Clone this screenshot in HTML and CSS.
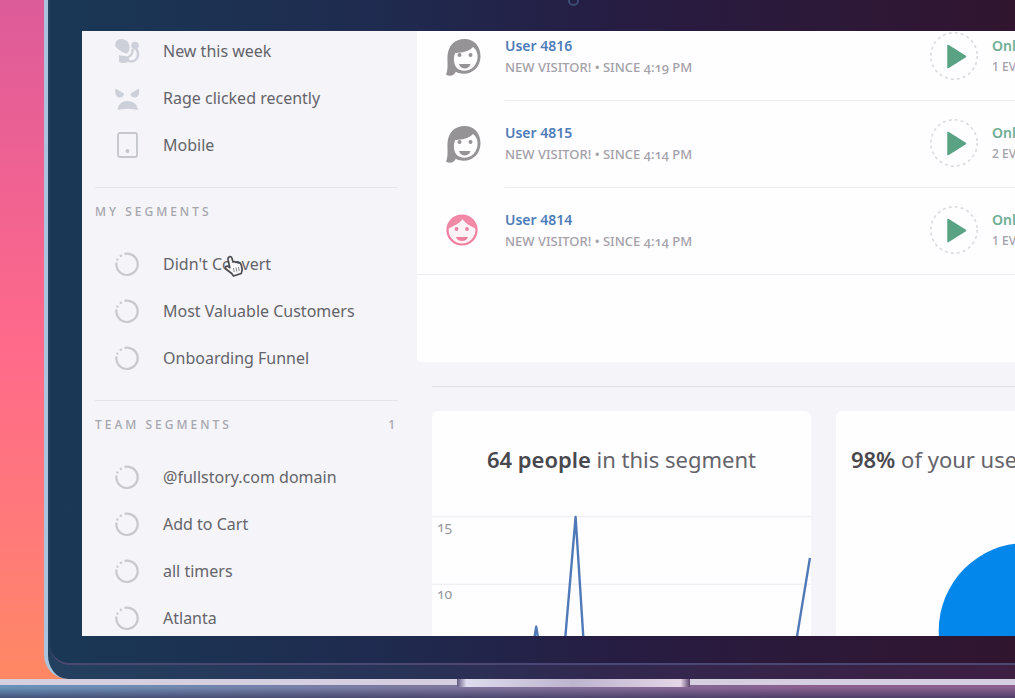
FILE: index.html
```html
<!DOCTYPE html>
<html lang="en">
<head>
<meta charset="utf-8">
<meta name="viewport" content="width=device-width, initial-scale=1">
<title>Segments</title>
<link rel="stylesheet" href="styles.css">
</head>
<body>
<svg class="defs" width="0" height="0" aria-hidden="true">
  <defs>
    <symbol id="ring" viewBox="0 0 26 26">
      <path d="M10.500 2.900A10.700 10.700 0 1 1 2.400 14.500V11.500" fill="none" stroke="#c8c8cd" stroke-width="2.200"/>
      <path d="M3 9.400l.8-1.600M6 5.500l1.700-1.300" fill="none" stroke="#c8c8cd" stroke-width="2.200"/>
    </symbol>
    <symbol id="woman" viewBox="0 0 36 40">
      <path fill-rule="evenodd" fill="#959396" d="M18.500 1C9 1 2 7.500 1.500 18c-.3 7 1 13-1.500 18.500 3.500 2.300 8 1.500 9.800-2.700 2.500 1.400 5 1.900 7.700 1.900 10 0 17-7.500 17-17.500S28 1 18.500 1zM27 9c3.300 2.200 4.600 5.700 4.600 9.400 0 8-5.800 14.300-13.600 14.300-5.500 0-9.500-3.700-10-9.500-.3-3.500.2-6 1.300-8.300C16 15 23 13.500 27 9z"/>
      <circle cx="13.500" cy="17" r="2" fill="#959396"/><circle cx="24.500" cy="17" r="2" fill="#959396"/>
      <path d="M13 26h11.500c-.8 3-3 4.400-5.700 4.400S13.700 29 13 26z" fill="#959396"/>
    </symbol>
    <symbol id="play" viewBox="0 0 48 48">
      <circle cx="24" cy="24" r="23.200" fill="none" stroke="#dcdadf" stroke-width="1.600" stroke-dasharray="3 3.075"/>
      <path d="M18 13.500L35.500 24.500 18 35.500z" fill="#59a283" stroke="#59a283" stroke-width="1.500" stroke-linejoin="round"/>
    </symbol>
  </defs>
</svg>
<div class="laptop">
  <div class="lid">
    <div class="bezel">
      <div class="camera"></div>
      <div class="screen">
        <nav class="sidebar">
          <ul class="segments">
            <li><a class="segment" href="#">
              <svg class="icon" viewBox="0 0 26 26" fill="#cdd0d8" aria-hidden="true">
                <path d="M2 3.500C5-.5 12 .5 14.500 5c2 4 1 9-1.500 10.500C9 15 2 11 1 7z"/>
                <circle cx="21" cy="7.500" r="3.800"/>
                <path d="M5 17c4 1.500 8 0 10 3l-1 4c-3 1.500-7 1.500-9-.5z"/>
                <path d="M20.500 9.500c5 4 4.500 11-.5 13.300-3 1.200-5.500.5-7.500-1.300M18.500 11c.5 4-2 7.500-6 9" fill="none" stroke="#cdd0d8" stroke-width="2.400"/>
              </svg>New this week</a></li>
            <li><a class="segment" href="#">
              <svg class="icon" viewBox="0 0 26 26" fill="#cdd0d8" aria-hidden="true">
                <path d="M1.500 3.500l8.500 5c0 2.500-2 4-4.500 4C2 12.500 .500 8 1.500 3.500zM25 3.500l-8.500 5c0 2.500 2 4 4.500 4 3.500 0 5-4.500 4-9zM3.500 24.500c1-5.500 4.500-8.500 10-8.500s9.500 3 10.500 8.500c-3 .8-5-.7-10.500-.7s-7 1.500-10 .7z"/>
              </svg>Rage clicked recently</a></li>
            <li><a class="segment" href="#">
              <svg class="icon" viewBox="0 0 26 26" fill="none" stroke="#c6c7cd" stroke-width="1.800" aria-hidden="true">
                <rect x="4" y="1" width="19" height="24" rx="2"/><circle cx="13.500" cy="19" r="1" fill="#c6c7cd"/>
              </svg>Mobile</a></li>
          </ul>
          <section class="group">
            <h2 class="group-title">MY SEGMENTS</h2>
            <ul class="segments">
              <li><a class="segment" href="#"><svg class="icon" aria-hidden="true"><use href="#ring"/></svg>Didn't Convert</a>
                <svg class="cursor" viewBox="0 0 20 22" aria-hidden="true">
                  <path d="M5 2c1.300-.9 2.600-.2 2.900 1L9 7c1-.8 2.200-.5 2.700.4.900-.6 2-.3 2.500.6 1.300-.4 2.500.2 3 1.700l.9 4.300c.2 1.700-.6 3-.8 4.500L9.500 21l-1.800-2.500-5.200-4c-1.300-1-1.500-2.300-.5-3s2-.3 2.800.4l1 .8L4 4.500C3.700 3.300 4 2.600 5 2z" fill="#f8f8fb" stroke="#4b4a50" stroke-width="1.700" stroke-linejoin="round"/>
                  <path d="M9.500 13l.7 4M12 12.500l.8 4M14.500 12l.7 4" stroke="#8a898f" fill="none"/>
                </svg></li>
              <li><a class="segment" href="#"><svg class="icon" aria-hidden="true"><use href="#ring"/></svg>Most Valuable Customers</a></li>
              <li><a class="segment" href="#"><svg class="icon" aria-hidden="true"><use href="#ring"/></svg>Onboarding Funnel</a></li>
            </ul>
          </section>
          <section class="group">
            <h2 class="group-title">TEAM SEGMENTS <span>1</span></h2>
            <ul class="segments">
              <li><a class="segment" href="#"><svg class="icon" aria-hidden="true"><use href="#ring"/></svg>@fullstory.com domain</a></li>
              <li><a class="segment" href="#"><svg class="icon" aria-hidden="true"><use href="#ring"/></svg>Add to Cart</a></li>
              <li><a class="segment" href="#"><svg class="icon" aria-hidden="true"><use href="#ring"/></svg>all timers</a></li>
              <li><a class="segment" href="#"><svg class="icon" aria-hidden="true"><use href="#ring"/></svg>Atlanta</a></li>
            </ul>
          </section>
        </nav>
        <main class="main">
          <div class="users">
            <article class="user">
              <svg class="avatar" aria-hidden="true"><use href="#woman"/></svg>
              <div class="details">
                <div class="who"><a class="name" href="#">User 4816</a><p class="meta">NEW VISITOR! • SINCE 4:19 PM</p></div>
                <button class="play" aria-label="Play session"><svg aria-hidden="true"><use href="#play"/></svg></button>
                <div class="status"><p class="online">Onl</p><p class="meta events">1 EV</p></div>
              </div>
            </article>
            <article class="user">
              <svg class="avatar" aria-hidden="true"><use href="#woman"/></svg>
              <div class="details">
                <div class="who"><a class="name" href="#">User 4815</a><p class="meta">NEW VISITOR! • SINCE 4:14 PM</p></div>
                <button class="play" aria-label="Play session"><svg aria-hidden="true"><use href="#play"/></svg></button>
                <div class="status"><p class="online">Onl</p><p class="meta events">2 EV</p></div>
              </div>
            </article>
            <article class="user">
              <svg class="avatar" viewBox="0 0 36 40" aria-hidden="true">
                <circle cx="16" cy="18" r="14.500" fill="#fdf3f7" stroke="#ef7f9f" stroke-width="2.200"/>
                <path d="M1.500 17C2 8 8 3 16 3s14 5 14.500 14C25.500 14.500 19.500 12 16.500 7 13.500 12 7 14 1.500 17z" fill="#f189a7"/>
                <circle cx="10.500" cy="17" r="1.900" fill="#ef7f9f"/><circle cx="21" cy="17" r="1.900" fill="#ef7f9f"/>
                <path d="M10 25h12c-.8 2.600-3 3.900-6 3.900s-5.200-1.300-6-3.900z" fill="#ef7f9f"/>
              </svg>
              <div class="details">
                <div class="who"><a class="name" href="#">User 4814</a><p class="meta">NEW VISITOR! • SINCE 4:14 PM</p></div>
                <button class="play" aria-label="Play session"><svg aria-hidden="true"><use href="#play"/></svg></button>
                <div class="status"><p class="online">Onl</p><p class="meta events">1 EV</p></div>
              </div>
            </article>
          </div>
          <div class="cards">
            <section class="card">
              <h3 class="card-title"><b>64 people</b> in this segment</h3>
              <svg class="chart" viewBox="0 0 380 204" role="img" aria-label="People per day">
                <path d="M0 16.500H380M0 84.500H380" stroke="#f0eff3" stroke-width="1.500"/>
                <text x="5" y="32">15</text><text x="5" y="99">10</text>
                <path d="M96 180L104.500 127 113 180M128 204L144 17 156 204M355 204L379 58" fill="none" stroke="#5079b8" stroke-width="2.400" stroke-linejoin="round"/>
              </svg>
            </section>
            <section class="card">
              <h3 class="card-title wide"><b>98%</b> of your use</h3>
              <svg class="chart" viewBox="0 0 380 204" role="img" aria-label="98 percent">
                <circle cx="191" cy="131" r="88" fill="#0387ea"/>
              </svg>
            </section>
          </div>
        </main>
      </div>
    </div>
  </div>
  <div class="base"><div class="notch"></div></div>
</div>
</body>
</html>
```

FILE: styles.css
```css
* { box-sizing: border-box; }
html, body { height: 100%; }
body {
  margin: 0;
  overflow: hidden;
  background: linear-gradient(#dc5b99 0%, #f06292 26%, #ff6a8a 50%, #ff7b78 78%, #ff8a60 100%);
  font-family: "Noto Sans", "Open Sans", sans-serif;
  color: #64646a;
}
h2, h3, p, ul { margin: 0; padding: 0; font-weight: 400; }
ul { list-style: none; }
a { text-decoration: none; color: inherit; }
svg { display: block; }
.defs { position: absolute; }

.laptop { height: 100vh; display: flex; flex-direction: column; }
.lid {
  flex: 1;
  min-height: 0;
  margin-left: 44px;
  padding: 0 0 14px 2px;
  display: flex;
  border-left: 4px solid #a9c4dc;
  border-bottom-left-radius: 24px;
  background: linear-gradient(90deg, #24405f, #283358 35%, #33274e 60%, #3d1f42);
}
.bezel {
  position: relative;
  flex: 1;
  min-width: 0;
  padding: 31px 0 27px 32px;
  display: flex;
  border-bottom: 2px solid #4b4873;
  border-bottom-left-radius: 20px;
  background: linear-gradient(90deg, #1a3856, #1f2a4f 35%, #271c42 60%, #31152f);
}
.camera {
  position: absolute;
  top: -4px;
  left: calc(54% - 3px);
  width: 11px;
  height: 10px;
  border: 2px solid #3c4c74;
  border-radius: 50%;
}
.screen {
  flex: 1;
  min-width: 0;
  display: flex;
  overflow: hidden;
  background: #f4f4f9;
}

.sidebar { flex: none; width: 335px; padding: 0 19px 0 13px; margin-top: -4px; font-size: 16px; font-weight: 500; }
.segments li { position: relative; }
.segment { display: flex; align-items: center; gap: 23px; height: 47px; padding-left: 19px; white-space: nowrap; }
.icon { width: 26px; height: 26px; flex: none; }
.group { margin-top: 19px; padding-top: 15px; border-top: 1px solid #e4e4ea; }
.group-title {
  display: flex;
  justify-content: space-between;
  margin-bottom: 19px;
  font-size: 12px;
  font-weight: 500;
  line-height: 18px;
  letter-spacing: 3px;
  color: #a6a6ad;
}
.cursor { position: absolute; top: 15px; left: 129px; width: 20px; height: 22px; }

.main { flex: 1; min-width: 0; }
.users { margin-top: -17px; padding-bottom: 87px; background: #fefdff; border-bottom-left-radius: 4px; }
.user { display: flex; padding-left: 29px; }
.user:last-child { border-bottom: 1px solid #eeedf2; }
.avatar { flex: none; width: 36px; height: 40px; margin: 24px 23px 0 0; }
.details { flex: 1; min-width: 0; display: flex; height: 87px; padding-top: 18px; border-bottom: 1px solid #eeedf2; }
.user:last-child .details { border-bottom: 0; height: 86px; }
.who { flex: 1; padding-top: 3px; }
.name, .online { display: block; font-size: 14px; line-height: 22px; font-weight: 600; color: #4d7cb8; }
.online { color: #6fae95; }
.meta { font-size: 13px; line-height: 20px; font-weight: 500; color: #a4a1a9; white-space: nowrap; font-feature-settings: "onum"; }
.meta.events { font-size: 12px; font-feature-settings: normal; }
.play { flex: none; width: 48px; height: 48px; padding: 0; border: 0; background: none; }
.play svg { width: 48px; height: 48px; overflow: visible; }
.status { flex: none; width: 37px; padding: 3px 0 0 14px; white-space: nowrap; }

.cards {
  display: grid;
  grid-template-columns: 65% 65%;
  gap: 25px;
  margin: 24px 0 0 15px;
  padding-top: 24px;
  border-top: 1px solid #e1e1e8;
}
.card { overflow: hidden; border-radius: 6px; background: #fefdff; }
.card-title { padding: 32px 0 24px; font-size: 22px; line-height: 33px; text-align: center; white-space: nowrap; }
.card-title b { font-weight: 600; color: #48484d; }
.card-title.wide { padding-left: 15px; text-align: left; }
.chart { width: 100%; }
.chart text { font-size: 14px; fill: #97979d; font-feature-settings: "onum"; }

.base {
  flex: none;
  height: 19px;
  border-top: 6px solid #d5cfe0;
  background: linear-gradient(transparent 20%, #2a284f99), linear-gradient(90deg, #6892b9, #7d789f 42%, #8a608f 80%);
}
.notch {
  width: 23%;
  height: 8px;
  margin: -6px 0 0 45%;
  background: linear-gradient(90deg, #5f587f, #dedcee 4%, #bdb4cf 50%, #e4d5e7 96%, #5d446c);
}
```
